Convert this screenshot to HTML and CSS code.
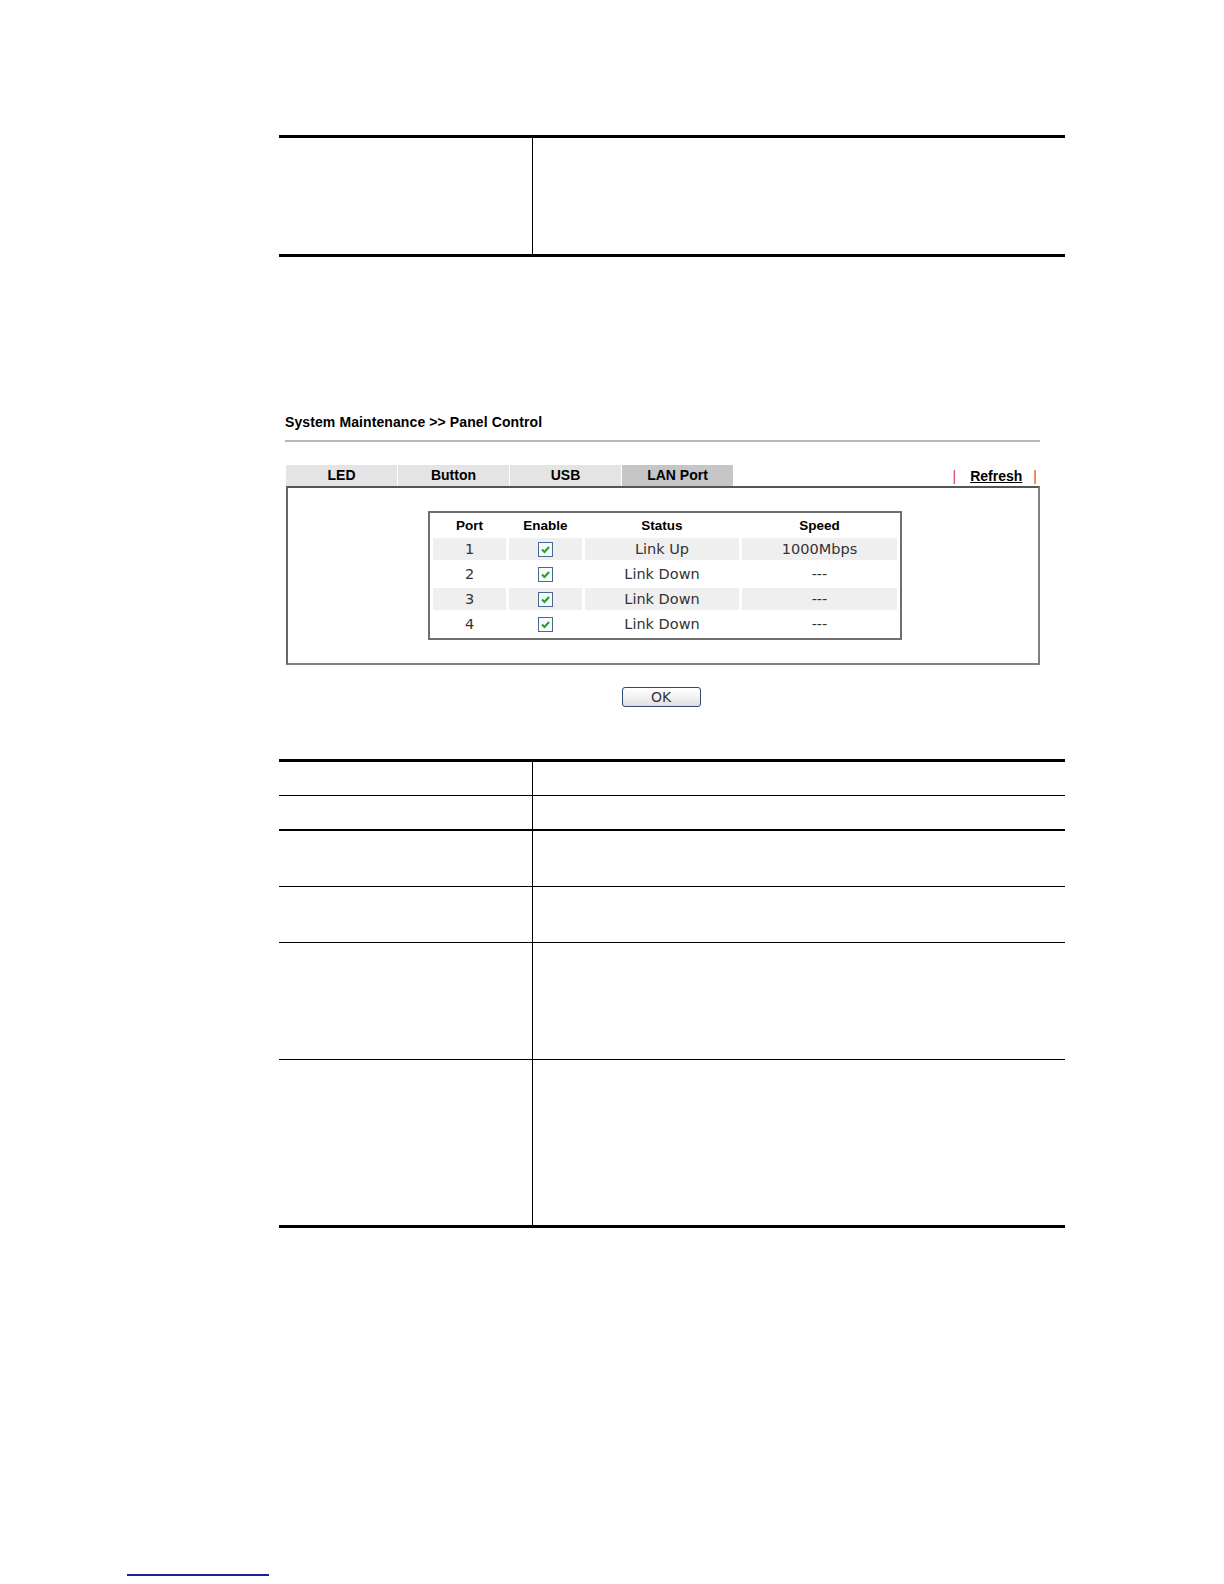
FILE: index.html
```html
<!DOCTYPE html>
<html>
<head>
<meta charset="utf-8">
<title>System Maintenance &gt;&gt; Panel Control</title>
<link rel="stylesheet" href="styles.css">
</head>
<body>
<div class="page">
  <div class="doc doc-top">
    <div class="doc-row r-top"><div class="c1"></div><div class="c2"></div></div>
  </div>

  <div class="router">
    <div class="title">System Maintenance &gt;&gt; Panel Control</div>
    <div class="title-line"></div>
    <div class="tabbar">
      <div class="tab">LED</div>
      <div class="tab">Button</div>
      <div class="tab">USB</div>
      <div class="tab active">LAN Port</div>
      <div class="spacer"></div>
      <div class="refresh"><span class="pipe first">|</span><a class="ref-link">Refresh</a><span class="pipe last">|</span></div>
    </div>
    <div class="panel">
      <table class="ports">
        <thead>
          <tr><th class="w1">Port</th><th class="w2">Enable</th><th class="w3">Status</th><th class="w4">Speed</th></tr>
        </thead>
        <tbody>
          <tr class="alt"><td>1</td><td><svg class="cb" viewBox="0 0 15 15" width="15" height="15"><rect x="0.5" y="0.5" width="14" height="14" fill="#f7fafc" stroke="#4a6a8c"/><polyline points="4,7.5 6.5,10 11,5" fill="none" stroke="#22a022" stroke-width="2"/></svg></td><td>Link Up</td><td>1000Mbps</td></tr>
          <tr><td>2</td><td><svg class="cb" viewBox="0 0 15 15" width="15" height="15"><rect x="0.5" y="0.5" width="14" height="14" fill="#f7fafc" stroke="#4a6a8c"/><polyline points="4,7.5 6.5,10 11,5" fill="none" stroke="#22a022" stroke-width="2"/></svg></td><td>Link Down</td><td>---</td></tr>
          <tr class="alt"><td>3</td><td><svg class="cb" viewBox="0 0 15 15" width="15" height="15"><rect x="0.5" y="0.5" width="14" height="14" fill="#f7fafc" stroke="#4a6a8c"/><polyline points="4,7.5 6.5,10 11,5" fill="none" stroke="#22a022" stroke-width="2"/></svg></td><td>Link Down</td><td>---</td></tr>
          <tr><td>4</td><td><svg class="cb" viewBox="0 0 15 15" width="15" height="15"><rect x="0.5" y="0.5" width="14" height="14" fill="#f7fafc" stroke="#4a6a8c"/><polyline points="4,7.5 6.5,10 11,5" fill="none" stroke="#22a022" stroke-width="2"/></svg></td><td>Link Down</td><td>---</td></tr>
        </tbody>
      </table>
    </div>
    <div class="btn-row"><button class="ok">OK</button></div>
  </div>

  <div class="doc doc-bottom">
    <div class="doc-row h33 thin"><div class="c1"></div><div class="c2"></div></div>
    <div class="doc-row h33 mid"><div class="c1"></div><div class="c2"></div></div>
    <div class="doc-row h55 thin"><div class="c1"></div><div class="c2"></div></div>
    <div class="doc-row h55 thin"><div class="c1"></div><div class="c2"></div></div>
    <div class="doc-row h116 thin"><div class="c1"></div><div class="c2"></div></div>
    <div class="doc-row h165"><div class="c1"></div><div class="c2"></div></div>
  </div>
</div>
<div class="footer-line"></div>
</body>
</html>
```
FILE: styles.css
```css
html, body {
  margin: 0;
  padding: 0;
  background: #ffffff;
}
body {
  font-family: "Liberation Sans", Arial, sans-serif;
  color: #000;
}
.page {
  padding-top: 135px;
  padding-left: 279px;
  width: 786px;
}
.doc {
  border-top: 3px solid #000;
  border-bottom: 3px solid #000;
  width: 786px;
}
.doc-row {
  display: grid;
  grid-template-columns: 253px 1fr;
}
.doc-row .c2 {
  border-left: 1px solid #000;
}
.r-top { height: 116px; }
.h33 { height: 33px; }
.h55 { height: 55px; }
.h116 { height: 116px; }
.h165 { height: 165px; }
.thin { border-bottom: 1px solid #000; }
.mid { border-bottom: 2px solid #000; }

.router {
  margin-top: 157px;
  margin-left: 6px;
  width: 755px;
}
.title {
  font-weight: bold;
  font-size: 14px;
  line-height: 16px;
  height: 16px;
  color: #000;
  letter-spacing: 0.1px;
}
.title-line {
  margin-top: 10px;
  height: 2px;
  background: #b8b8b8;
  width: 755px;
}
.tabbar {
  margin-top: 23px;
  margin-left: 1px;
  display: flex;
  height: 21px;
  align-items: stretch;
}
.tab {
  width: 111px;
  margin-right: 1px;
  background: #e4e4e4;
  font-weight: bold;
  font-size: 14px;
  line-height: 20px;
  text-align: center;
  color: #000;
}
.tab.active {
  background: #c6c6c6;
}
.spacer { flex: 1; }
.refresh {
  display: flex;
  align-items: center;
  padding-right: 3px;
  font-size: 14px;
  line-height: 20px;
}
.pipe {
  color: #d83c3c;
  font-weight: normal;
}
.pipe.first { padding-right: 14px; }
.pipe.last { padding-left: 11px; }
.ref-link {
  font-weight: bold;
  text-decoration: underline;
  color: #000;
}
.panel {
  margin-left: 1px;
  width: 750px;
  border: 2px solid #808080;
  border-top-color: #555;
  border-left-color: #666;
  padding: 23px 0 23px 0;
  display: flex;
  justify-content: center;
}
.ports {
  border: 2px solid #6f6f6f;
  border-spacing: 3px;
  border-collapse: separate;
  margin-left: 4px;
}
.ports th {
  font-family: "Liberation Sans", Arial, sans-serif;
  font-weight: bold;
  font-size: 13.5px;
  height: 19px;
  padding: 0;
  line-height: 19px;
  color: #000;
}
.w1 { width: 73px; }
.w2 { width: 73px; }
.w3 { width: 154px; }
.w4 { width: 155px; }
.ports td {
  font-family: "DejaVu Sans", Verdana, sans-serif;
  font-size: 14.5px;
  color: #333;
  text-align: center;
  height: 22px;
  padding: 0;
  line-height: 22px;
}
.ports tr.alt td {
  background: #efefef;
}
.cb {
  display: block;
  margin: 0 auto;
}
.btn-row {
  margin-top: 22px;
  display: flex;
  justify-content: center;
  padding-right: 3px;
}
.ok {
  width: 79px;
  height: 20px;
  padding: 0;
  border: 1px solid #2c4a74;
  border-radius: 3px;
  background: linear-gradient(#ffffff, #f2f2f2 50%, #dedede);
  font-family: "DejaVu Sans", Verdana, sans-serif;
  font-size: 14px;
  color: #333;
  line-height: 18px;
}
.doc-bottom {
  margin-top: 52px;
}
.footer-line {
  margin-top: 346px;
  margin-left: 127px;
  width: 142px;
  height: 2px;
  background: #1e1ea0;
}
```
